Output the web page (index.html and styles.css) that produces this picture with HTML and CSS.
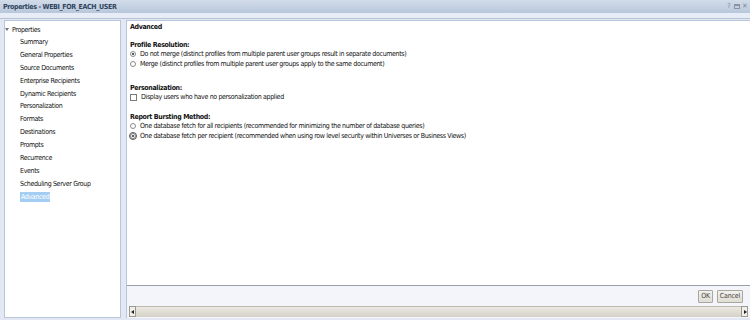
FILE: index.html
```html
<!DOCTYPE html>
<html>
<head>
<meta charset="utf-8">
<link rel="stylesheet" href="styles.css">
</head>
<body>
<div class="titlebar">
  <span class="title">Properties - WEBI_FOR_EACH_USER</span>
  <span class="tools"><span class="ti">?</span><span class="ti box"></span><span class="ti">✕</span></span>
</div>
<div class="subbar"></div>
<div class="main">
  <div class="left">
    <div class="root"><span class="tri"></span>Properties</div>
    <ul class="tree">
      <li>Summary</li>
      <li>General Properties</li>
      <li>Source Documents</li>
      <li>Enterprise Recipients</li>
      <li>Dynamic Recipients</li>
      <li>Personalization</li>
      <li>Formats</li>
      <li>Destinations</li>
      <li>Prompts</li>
      <li>Recurrence</li>
      <li>Events</li>
      <li>Scheduling Server Group</li>
      <li><span class="sel">Advanced</span></li>
    </ul>
  </div>
  <div class="right">
    <div class="content">
      <div class="h">Advanced</div>
      <div class="sec s1">
        <div class="label">Profile Resolution:</div>
        <div class="opt"><span class="radio on"></span>Do not merge (distinct profiles from multiple parent user groups result in separate documents)</div>
        <div class="opt"><span class="radio"></span>Merge (distinct profiles from multiple parent user groups apply to the same document)</div>
      </div>
      <div class="sec s2">
        <div class="label">Personalization:</div>
        <div class="opt"><span class="check"></span>Display users who have no personalization applied</div>
      </div>
      <div class="sec s3">
        <div class="label">Report Bursting Method:</div>
        <div class="opt"><span class="radio"></span>One database fetch for all recipients (recommended for minimizing the number of database queries)</div>
        <div class="opt"><span class="radio on focus"></span>One database fetch per recipient (recommended when using row level security within Universes or Business Views)</div>
      </div>
    </div>
    <div class="footer">
      <button class="btn">OK</button>
      <button class="btn">Cancel</button>
    </div>
    <div class="hscroll">
      <span class="arrow l"></span>
      <span class="track"></span>
      <span class="arrow r"></span>
    </div>
  </div>
</div>
</body>
</html>
```

FILE: styles.css
```css
* { box-sizing: border-box; }
html, body { margin: 0; padding: 0; }
body {
  width: 750px;
  height: 320px;
  overflow: hidden;
  background: #e3e8f4;
  font-family: "DejaVu Sans Condensed", "Liberation Sans", sans-serif;
  font-size: 7px;
  letter-spacing: -0.35px;
  color: #111;
}
.titlebar {
  height: 13px;
  background: linear-gradient(#d2dcea, #b8c7db);
  display: flex;
  align-items: center;
  justify-content: space-between;
  padding: 0 2px 0 3px;
}
.title {
  font-weight: bold;
  color: #2f4460;
}
.tools { display: flex; gap: 2px; color: #7c8898; letter-spacing: 0; }
.ti { width: 6px; text-align: center; line-height: 7px; }
.ti.box { border: 1px solid #8a95a4; border-top-width: 2px; height: 5px; width: 6px; margin-top: 1px; }
.subbar {
  height: 6px;
  background: #e8ecf7;
  border-bottom: 1px solid #b4c2d6;
}
.main {
  display: flex;
  gap: 5px;
  padding: 1px 0 2px 4px;
  height: 301px;
}
.left {
  width: 117px;
  background: #fff;
  border: 1px solid #b7c6da;
  padding-top: 2px;
}
.root {
  display: flex;
  align-items: center;
  height: 13px;
}
.tri {
  width: 0; height: 0;
  border-left: 2.5px solid transparent;
  border-right: 2.5px solid transparent;
  border-top: 3px solid #6a7584;
  margin-right: 3px;
}
.tree { list-style: none; margin: 0; padding: 0 0 0 15px; }
.tree li { height: 12.9px; line-height: 12.9px; }
.sel {
  background: #a4cdf4;
  color: #fff;
  padding: 1px 1px;
}
.right {
  flex: 1;
  display: flex;
  flex-direction: column;
  border-left: 1px solid #b7c6da;
  border-top: 1px solid #b7c6da;
}
.content {
  flex: 1;
  background: #fff;
  padding: 0 0 0 3px;
  border-bottom: 1px solid #9aa0a8;
}
.h { font-weight: bold; height: 8px; line-height: 8px; margin-top: 2px; }
.s1 { margin-top: 11px; }
.s2 { margin-top: 16px; }
.s3 { margin-top: 12px; }
.label { font-weight: bold; height: 7px; line-height: 7px; }
.opt { display: flex; align-items: center; height: 10px; line-height: 10px; }
.radio {
  width: 6px; height: 6px;
  border: 1px solid #8a8a8a;
  border-radius: 50%;
  margin: 0 4px 0 0;
  position: relative;
  background: #fff;
}
.radio.on::after {
  content: "";
  position: absolute;
  left: 1px; top: 1px;
  width: 2px; height: 2px;
  background: #222;
  border-radius: 50%;
}
.radio.focus { outline: 1px solid #555; outline-offset: 0; }
.check {
  width: 7px; height: 7px;
  border: 1px solid #7a7a7a;
  margin-right: 4px;
  background: #fff;
}
.footer {
  height: 20px;
  background: #f3f5fb;
  display: flex;
  justify-content: flex-end;
  align-items: center;
  gap: 4px;
  padding-right: 7px;
}
.btn {
  font-family: inherit;
  font-size: 7px;
  letter-spacing: -0.2px;
  color: #444;
  height: 13px;
  padding: 0 2px;
  background: linear-gradient(#f3f2ed, #dfddd4);
  border: 1px solid #a9a79e;
  border-radius: 1px;
  line-height: 11px;
}
.hscroll {
  height: 12px;
  display: flex;
  align-items: stretch;
  background: #f3f5fb;
  padding: 0 2px 1px 2px;
}
.track {
  flex: 1;
  background: linear-gradient(#ebe9e2, #d4d1c8);
  border-top: 1px solid #bdbab0;
}
.arrow {
  width: 7px;
  background: #f0efe9;
  border: 1px solid #9c998f;
  position: relative;
}
.arrow::after {
  content: "";
  position: absolute;
  top: 2.5px;
  width: 0; height: 0;
  border-top: 2.5px solid transparent;
  border-bottom: 2.5px solid transparent;
}
.arrow.l::after { left: 1px; border-right: 3px solid #222; }
.arrow.r::after { left: 2px; border-left: 3px solid #222; }
```
